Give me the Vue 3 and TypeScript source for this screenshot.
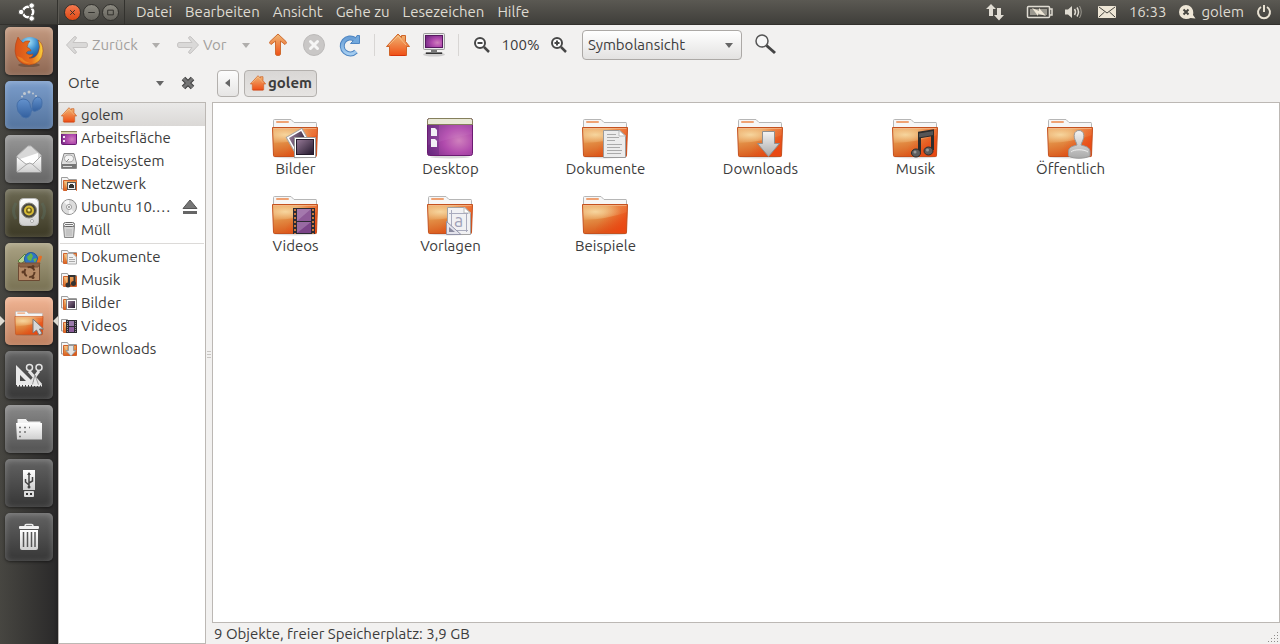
<script setup lang="ts">
import { ref } from 'vue'

interface Entry {
  label: string
  icon: string
}
interface Place extends Entry {
  ejectable?: boolean
}
interface LauncherApp extends Entry {
  tone: string
  running?: boolean
}

const menus: string[] = ['Datei', 'Bearbeiten', 'Ansicht', 'Gehe zu', 'Lesezeichen', 'Hilfe']

const launcher: LauncherApp[] = [
  { label: 'Firefox', icon: 'firefox', tone: 'copper' },
  { label: 'Gwibber', icon: 'feet', tone: 'blue' },
  { label: 'Evolution', icon: 'envelope', tone: 'silver' },
  { label: 'Banshee', icon: 'speaker', tone: 'olive' },
  { label: 'Software-Center', icon: 'bag', tone: 'khaki' },
  { label: 'Dateien', icon: 'files', tone: 'peach', running: true },
  { label: 'Anwendungen', icon: 'tools', tone: 'dark' },
  { label: 'Dateien und Ordner', icon: 'drawer', tone: 'grey' },
  { label: 'USB-Stick', icon: 'usb', tone: 'dark' },
  { label: 'Müll', icon: 'bin', tone: 'dark' },
]

const places: Place[] = [
  { label: 'golem', icon: 'home' },
  { label: 'Arbeitsfläche', icon: 'desktop' },
  { label: 'Dateisystem', icon: 'disk' },
  { label: 'Netzwerk', icon: 's-network' },
  { label: 'Ubuntu 10.…', icon: 'cd', ejectable: true },
  { label: 'Müll', icon: 's-trash' },
]

const bookmarks: Place[] = [
  { label: 'Dokumente', icon: 's-documents' },
  { label: 'Musik', icon: 's-music' },
  { label: 'Bilder', icon: 's-pictures' },
  { label: 'Videos', icon: 's-videos' },
  { label: 'Downloads', icon: 's-downloads' },
]

const folders: Entry[] = [
  { label: 'Bilder', icon: 'pictures' },
  { label: 'Desktop', icon: 'desktop-large' },
  { label: 'Dokumente', icon: 'documents' },
  { label: 'Downloads', icon: 'downloads' },
  { label: 'Musik', icon: 'music' },
  { label: 'Öffentlich', icon: 'public' },
  { label: 'Videos', icon: 'videos' },
  { label: 'Vorlagen', icon: 'templates' },
  { label: 'Beispiele', icon: 'folder' },
]

const selected = ref('golem')
const view = ref('Symbolansicht')
</script>

<template>
  <svg class="sprite" aria-hidden="true">
    <defs>
      <linearGradient id="g-folder" x1="0" y1="0" x2="0.3" y2="1">
        <stop offset="0" stop-color="#eda866" /><stop offset="0.5" stop-color="#e39047" /><stop offset="1" stop-color="#da5a1c" />
      </linearGradient>
      <linearGradient id="g-red" x1="0" y1="0" x2="1" y2="0.35">
        <stop offset="0.5" stop-color="#ee4310" stop-opacity="0" /><stop offset="1" stop-color="#ee4310" stop-opacity="0.75" />
      </linearGradient>
      <radialGradient id="g-shine" cx="0.28" cy="0.45" r="0.6">
        <stop offset="0" stop-color="#f8dca6" stop-opacity="0.9" /><stop offset="1" stop-color="#f6d39b" stop-opacity="0.1" />
      </radialGradient>
      <linearGradient id="g-orange" x1="0" y1="0" x2="0" y2="1">
        <stop offset="0" stop-color="#efb877" /><stop offset="1" stop-color="#ef5016" />
      </linearGradient>
      <linearGradient id="g-white" x1="0" y1="0" x2="0" y2="1">
        <stop offset="0" stop-color="#ffffff" /><stop offset="1" stop-color="#cfcfcf" />
      </linearGradient>
      <linearGradient id="g-steel" x1="0" y1="0" x2="0" y2="1">
        <stop offset="0" stop-color="#f4f4f4" /><stop offset="1" stop-color="#a9a9a9" />
      </linearGradient>
      <linearGradient id="g-blue" x1="0" y1="0" x2="0" y2="1">
        <stop offset="0" stop-color="#6a9fd6" /><stop offset="1" stop-color="#a5cdf0" />
      </linearGradient>
      <radialGradient id="g-purple" cx="0.7" cy="0.6" r="0.75">
        <stop offset="0" stop-color="#cf80bd" /><stop offset="0.45" stop-color="#b14bad" /><stop offset="1" stop-color="#772c86" />
      </radialGradient>
      <linearGradient id="g-photo" x1="0" y1="0" x2="1" y2="1">
        <stop offset="0" stop-color="#937794" /><stop offset="1" stop-color="#251a2e" />
      </linearGradient>
      <radialGradient id="g-globe" cx="0.45" cy="0.2" r="0.8">
        <stop offset="0" stop-color="#a5e5fb" /><stop offset="0.45" stop-color="#3588cb" /><stop offset="1" stop-color="#123675" />
      </radialGradient>
      <linearGradient id="g-fox" x1="0" y1="0" x2="1" y2="0">
        <stop offset="0" stop-color="#d9521a" /><stop offset="0.6" stop-color="#e8701d" /><stop offset="1" stop-color="#fbd43d" />
      </linearGradient>
      <linearGradient id="g-foot" x1="0" y1="0" x2="0" y2="1">
        <stop offset="0" stop-color="#6492cd" /><stop offset="1" stop-color="#325f9e" />
      </linearGradient>
    </defs>

    <symbol id="folder" viewBox="0 0 48 44">
      <ellipse cx="24" cy="41" rx="21" ry="1.5" fill="#000" opacity="0.13" />
      <path d="M2.5 14V4.5Q2.5 3.5 3.5 3.5H20L23 6.5H45Q45.5 6.5 45.5 7.5V14Z" fill="#f6f6f6" stroke="#b6b6b6" />
      <rect x="5" y="5" width="13" height="2" rx="1" fill="#efa273" />
      <path d="M1.5 11.5H46.5L45.5 39.5Q45.5 40.5 44.5 40.5H3.5Q2.5 40.5 2.5 39.5Z" fill="url(#g-folder)" />
      <path d="M1.5 11.5H46.5L45.5 40.5H2.5Z" fill="url(#g-red)" />
      <path d="M2 12H46V19Q28 26 2 27Z" fill="url(#g-shine)" />
      <path d="M1.5 11.5H46.5L45.5 39.5Q45.5 40.5 44.5 40.5H3.5Q2.5 40.5 2.5 39.5Z" fill="none" stroke="#c4511f" />
      <path d="M2.5 12.5H45.5" stroke="#f5bd90" opacity="0.7" />
    </symbol>
    <symbol id="pictures" viewBox="0 0 48 44">
      <use href="#folder" width="48" height="44" />
      <g transform="rotate(-30 26 25)">
        <rect x="18.5" y="16.5" width="18" height="18" fill="#fff" stroke="#a5a5a5" />
        <rect x="20.5" y="18.5" width="14" height="13" fill="url(#g-photo)" />
      </g>
      <rect x="23.5" y="21.5" width="21" height="20" fill="#fff" stroke="#9c9c9c" />
      <rect x="25" y="23" width="18" height="16" fill="#241a2b" />
      <rect x="26" y="24" width="16" height="14" fill="url(#g-photo)" />
    </symbol>
    <symbol id="desktop-large" viewBox="0 0 48 44">
      <ellipse cx="24" cy="41" rx="20" ry="1.5" fill="#000" opacity="0.15" />
      <rect x="1.5" y="2.5" width="45" height="37" rx="2" fill="url(#g-purple)" stroke="#6b1b72" />
      <path d="M2 9H46V18Q25 22 2 29Z" fill="#d08ad0" opacity="0.15" />
      <rect x="2" y="9" width="11" height="30" fill="#3f1f6a" opacity="0.25" />
      <path d="M1.5 8.5V4.5Q1.5 2.5 3.5 2.5H44.5Q46.5 2.5 46.5 4.5V8.5Z" fill="#e9e8d6" stroke="#85805c" />
      <path d="M5 12H9L11 14V20H5ZM5 23H9L11 25V31H5Z" fill="#f2eff5" />
    </symbol>
    <symbol id="documents" viewBox="0 0 48 44">
      <use href="#folder" width="48" height="44" />
      <path d="M22.5 14.5H39L44.5 20V41.5H22.5Z" fill="#ececec" stroke="#9b9b9b" />
      <path d="M38 14.5V20H44.5Z" fill="#fff" stroke="#bbb" />
      <path d="M26 18.5H35M26 21.5H38M26 24.5H34M26 28.5H41M26 31.5H39M26 34.5H41M26 37.5H40" stroke="#aaa" />
    </symbol>
    <symbol id="downloads" viewBox="0 0 48 44">
      <use href="#folder" width="48" height="44" />
      <path d="M26.5 15.5H38.5V27.5H43.5L32.5 40.5L21.5 27.5H26.5Z" fill="url(#g-steel)" stroke="#8f8f8f" />
    </symbol>
    <symbol id="music" viewBox="0 0 48 44">
      <use href="#folder" width="48" height="44" />
      <path d="M28.500 36V17L41.500 15V34" fill="none" stroke="#2c2c2c" stroke-width="3" />
      <path d="M27.500 17L42.500 14.500V19.500L27.500 22Z" fill="#555" stroke="#2c2c2c" />
      <ellipse cx="25" cy="37" rx="4.500" ry="4" fill="#5e5e5e" stroke="#2c2c2c" />
      <ellipse cx="37.500" cy="35" rx="4.500" ry="4" fill="#5e5e5e" stroke="#2c2c2c" />
      <circle cx="24" cy="36" r="1.500" fill="#999" /><circle cx="36.500" cy="34" r="1.500" fill="#999" />
    </symbol>
    <symbol id="public" viewBox="0 0 48 44">
      <use href="#folder" width="48" height="44" />
      <path d="M31 29Q30.500 27 29.500 25C27 20 28 14.500 33 14.500C38 14.500 39 20 36.500 25Q35.500 27 35 29C40 30.500 44 31 44 36V40C39 43 27 43 22.500 40V36C22.500 31 26 30.500 31 29Z" fill="url(#g-steel)" stroke="#999" />
      <path d="M25 36C28 33 38 33 42 36" fill="none" stroke="#fff" opacity="0.7" />
    </symbol>
    <symbol id="videos" viewBox="0 0 48 44">
      <use href="#folder" width="48" height="44" />
      <rect x="22" y="15" width="22" height="26" fill="#2d2b33" />
      <rect x="26" y="16" width="14" height="12" fill="#8e5a98" /><rect x="26" y="29" width="14" height="11" fill="#7b4488" />
      <path d="M26 16H40L26 28ZM26 29H40L26 40Z" fill="#cdb2d4" opacity="0.35" />
      <path d="M24 16V41M42 16V41" stroke="#c9773f" stroke-width="2" stroke-dasharray="2 2" />
    </symbol>
    <symbol id="templates" viewBox="0 0 48 44">
      <use href="#folder" width="48" height="44" />
      <path d="M21.5 14.5H39L44.5 20V41.5H21.5Z" fill="#f1f1f3" stroke="#a3a3a3" />
      <path d="M38 14.5V20H44.5Z" fill="#fff" stroke="#bbb" />
      <path d="M25.5 17V37M40.5 20V39M23 20.5H42M27 37.5H42" stroke="#a9abbd" />
      <text x="28" y="34" font-size="18" fill="#9fa1b8">a</text>
      <path d="M20.5 28.5L35 41.5H20.5Z" fill="#e3e3ec" stroke="#9294a9" />
      <path d="M23 34L29 39H23Z" fill="#8a8ba0" />
    </symbol>

    <symbol id="home" viewBox="0 0 24 24">
      <path d="M0.5 13.5L12 1L15.5 4.5V2.5H19.5V8.5L23.5 13.5H20.5V22.5H3.5V13.5Z" fill="url(#g-orange)" stroke="#cf6428" />
      <path d="M4.5 22.5H19.5" stroke="#d7340c" />
      <path d="M3 12L12 3L20 12" fill="none" stroke="#fad3a0" opacity="0.6" />
    </symbol>
    <symbol id="desktop" viewBox="0 0 16 16">
      <rect x="0.5" y="1.5" width="15" height="13" rx="1" fill="url(#g-purple)" stroke="#6b1b72" />
      <rect x="0" y="1" width="16" height="3" fill="#d7d3ad" /><path d="M0 1.5H16" stroke="#8a845e" />
      <path d="M2 6H4V8H2ZM2 10H4V12H2Z" fill="#f3e7f5" />
    </symbol>
    <symbol id="disk" viewBox="0 0 16 16">
      <path d="M3 0.5H13L15.5 10V15.5H0.5V10Z" fill="#dedede" stroke="#8b8b8b" />
      <path d="M1 11H15V15H1Z" fill="#777" />
      <ellipse cx="8" cy="5.5" rx="4.5" ry="3.5" fill="#f4f4f4" stroke="#aaa" /><path d="M8 6L5 9" stroke="#888" /><path d="M2 13.5H11" stroke="#ddd" />
    </symbol>
    <symbol id="s-folder" viewBox="0 0 16 16">
      <path d="M0.5 13V1.5H6.5L7.5 3.5H15.5V13Z" fill="#f5f5f5" stroke="#9e9e9e" />
      <path d="M2.5 4.5H15.5V14.5H2.5Z" fill="url(#g-folder)" stroke="#d0622c" />
      <path d="M3 5H6V12Z" fill="#f8dca6" opacity="0.5" />
    </symbol>
    <symbol id="s-network" viewBox="0 0 16 16">
      <use href="#s-folder" width="16" height="16" />
      <rect x="6" y="6" width="9" height="9" fill="#fff" /><rect x="6.5" y="6.5" width="8" height="7" fill="#f1f1f1" stroke="#555" />
      <path d="M8 12V9H9V8H12V9H13V12Z" fill="#333" />
    </symbol>
    <symbol id="cd" viewBox="0 0 16 16">
      <circle cx="8" cy="8" r="7.5" fill="#dcdcdc" stroke="#8e8e8e" />
      <path d="M8 8L3 3A7 7 0 0 1 8 1ZM8 8L13 13A7 7 0 0 1 8 15Z" fill="#f7f7f7" />
      <circle cx="8" cy="8" r="2.5" fill="#fff" stroke="#999" /><circle cx="8" cy="8" r="1" fill="#888" />
    </symbol>
    <symbol id="s-trash" viewBox="0 0 16 16">
      <path d="M2.5 4H13.5L12.5 15.500H3.5Z" fill="#d4d4d4" stroke="#868686" />
      <path d="M6 7V14M8 7V14M10 7V14" stroke="#b4b4b4" />
      <rect x="2.5" y="0.5" width="11" height="4" rx="2" fill="#f4f4f4" stroke="#666" /><path d="M4 2.5H12" stroke="#777" />
    </symbol>
    <symbol id="s-documents" viewBox="0 0 16 16">
      <use href="#s-folder" width="16" height="16" />
      <path d="M6.5 4.5H12L15.5 8V15H6.5Z" fill="#f1f1f1" stroke="#aaa" /><path d="M8 8.5H12M8 10.5H14M8 12.5H14" stroke="#aaa" />
    </symbol>
    <symbol id="s-music" viewBox="0 0 16 16">
      <use href="#s-folder" width="16" height="16" />
      <path d="M8 12V4H13.5V11" fill="none" stroke="#333" stroke-width="2" /><circle cx="7" cy="13" r="2.5" fill="#333" /><circle cx="12.5" cy="11.5" r="2.5" fill="#333" />
    </symbol>
    <symbol id="s-pictures" viewBox="0 0 16 16">
      <use href="#s-folder" width="16" height="16" />
      <rect x="5.5" y="4.5" width="10" height="10" fill="#fff" stroke="#888" /><rect x="7" y="6" width="7" height="7" fill="url(#g-photo)" />
    </symbol>
    <symbol id="s-videos" viewBox="0 0 16 16">
      <use href="#s-folder" width="16" height="16" />
      <rect x="5" y="2" width="11" height="13" fill="#2d2b33" /><rect x="8" y="3" width="5" height="5" fill="#9a7aab" /><rect x="8" y="9" width="5" height="5" fill="#8d5c9c" />
      <path d="M6.5 3V15M14.5 3V15" stroke="#999" stroke-dasharray="1 1" />
    </symbol>
    <symbol id="s-downloads" viewBox="0 0 16 16">
      <use href="#s-folder" width="16" height="16" />
      <path d="M7.5 4.5H12.5V9.5H15L10 15L5 9.5H7.5Z" fill="#e4e4e4" stroke="#999" />
    </symbol>

    <symbol id="arrow-left" viewBox="0 0 24 24">
      <path d="M1.5 12L9 4Q10 3 11 4L11.5 5L8 9.5H21Q22.5 9.5 22.5 12Q22.5 14.5 21 14.5H8L11.5 19L11 20Q10 21 9 20Z" fill="#dad9d8" stroke="#c6c4c3" />
    </symbol>
    <symbol id="arrow-up" viewBox="0 0 24 24">
      <path d="M12 1L20 8.5Q21 9.5 20 10.5L19 11.5L14.5 8V21Q14.5 22.5 12 22.5Q9.5 22.5 9.5 21V8L5 11.5L4 10.5Q3 9.5 4 8.5Z" fill="url(#g-orange)" stroke="#cf6b2f" />
    </symbol>
    <symbol id="stop" viewBox="0 0 24 24">
      <circle cx="12" cy="12" r="10.5" fill="#c9c7c6" stroke="#bcbab9" /><path d="M8.5 8.5L15.5 15.5M15.5 8.5L8.5 15.5" stroke="#f6f6f5" stroke-width="3" stroke-linecap="round" />
    </symbol>
    <symbol id="reload" viewBox="0 0 24 24">
      <path d="M18 18.500A8 8 0 1 1 17 6.500" fill="none" stroke="#4f86c2" stroke-width="5" />
      <path d="M12.500 10.500H21.500V2.500H19L17 6Z" fill="#72a8dc" stroke="#4f86c2" />
      <path d="M18 18.500A8 8 0 1 1 17 6.500" fill="none" stroke="url(#g-blue)" stroke-width="3" /><path d="M18 9L17 6" stroke="#72a8dc" stroke-width="3" />
    </symbol>
    <symbol id="computer" viewBox="0 0 24 24">
      <ellipse cx="12" cy="21.5" rx="11" ry="2" fill="#aaa" opacity="0.5" />
      <path d="M9 16H15V19H20Q21 21 20 21H4Q3 21 4 19H9Z" fill="#777" /><path d="M4 20.5H20" stroke="#333" />
      <rect x="1.5" y="0.5" width="21" height="16" rx="1" fill="#e9e9e9" stroke="#9b9b9b" /><rect x="3.5" y="2.5" width="17" height="12" fill="url(#g-purple)" stroke="#56195f" />
    </symbol>
    <symbol id="zoom-out" viewBox="0 0 16 16">
      <circle cx="6" cy="6" r="5" fill="#fff" stroke="#474747" stroke-width="2" /><path d="M10 10L15 15" stroke="#474747" stroke-width="2.5" /><path d="M3.500 6H8.500" stroke="#474747" stroke-width="2" />
    </symbol>
    <symbol id="zoom-in" viewBox="0 0 16 16">
      <use href="#zoom-out" width="16" height="16" /><path d="M6 3.500V8.500" stroke="#474747" stroke-width="2" />
    </symbol>
    <symbol id="search" viewBox="0 0 24 24">
      <circle cx="9" cy="8" r="6" fill="#f7f7f7" stroke="#555" stroke-width="1.5" /><path d="M13.5 12.5L22 20" stroke="#444" stroke-width="3" />
    </symbol>
    <symbol id="caret" viewBox="0 0 10 10">
      <path d="M1 3H9L5 8Z" fill="currentColor" />
    </symbol>
    <symbol id="close-places" viewBox="0 0 16 16">
      <path d="M3.5 3.5L12.5 12.5M12.5 3.5L3.5 12.5" stroke="#3f3f3f" stroke-width="5" /><path d="M3.5 3.5L12.5 12.5M12.5 3.5L3.5 12.5" stroke="#747474" stroke-width="3" />
    </symbol>
    <symbol id="eject" viewBox="0 0 16 16">
      <path d="M8 1L15 9.5H1Z" fill="#777" stroke="#555" /><rect x="1" y="12" width="14" height="3" fill="#666" />
    </symbol>

    <symbol id="ubuntu" viewBox="0 0 24 24">
      <circle cx="12" cy="12" r="5.5" fill="none" stroke="#fff" stroke-width="3" />
      <path d="M12 12L4 12M12 12L16 5M12 12L16 19" stroke="#4c4a45" stroke-width="1.5" />
      <circle cx="12" cy="12" r="4" fill="#4c4a45" />
      <g fill="#fff" stroke="#4c4a45"><circle cx="4.5" cy="12" r="3" /><circle cx="16" cy="5" r="3" /><circle cx="16" cy="19" r="3" /></g>
    </symbol>
    <symbol id="network" viewBox="0 0 20 20">
      <path d="M6 2L11 7H8V14H4V7H1ZM14 18.500L9 13H12V6H16V13H19Z" fill="#dfdbd2" />
    </symbol>
    <symbol id="battery" viewBox="0 0 28 16">
      <rect x="1.5" y="2.5" width="22" height="11" rx="1" fill="none" stroke="#dfdbd2" stroke-width="1.5" /><rect x="4" y="5" width="17" height="6" fill="#9b988f" />
      <path d="M24 5H26V11H24" fill="none" stroke="#dfdbd2" stroke-width="1.5" /><path d="M6 4L13 7V4L20 12L12 9.5V12Z" fill="#eee6d6" />
    </symbol>
    <symbol id="sound" viewBox="0 0 18 16">
      <path d="M1 5.5H4L8 2V14L4 10.5H1Z" fill="#dfdbd2" /><path d="M10.5 5Q12.5 8 10.5 11M13 3.5Q16 8 13 12.5" fill="none" stroke="#dfdbd2" stroke-width="1.5" /><path d="M15.5 2Q19 8 15.5 14" fill="none" stroke="#9b988f" />
    </symbol>
    <symbol id="mail" viewBox="0 0 20 16">
      <rect x="1" y="2" width="18" height="12" rx="1" fill="#eee6d6" /><path d="M2 3L10 9L18 3M2 13L7.5 8M18 13L12.5 8" fill="none" stroke="#45443f" />
    </symbol>
    <symbol id="chat" viewBox="0 0 18 16">
      <path d="M8 1A7 7 0 1 0 8 15Q11 15 12.5 14L17.5 14.5L15 11Q16 6 13 3Q11 1 8 1Z" fill="#eee6d6" /><path d="M5.5 5.5L10.5 10.5M10.5 5.5L5.5 10.5" stroke="#45443f" stroke-width="2" />
    </symbol>
    <symbol id="power" viewBox="0 0 16 16">
      <path d="M5 3A6 6 0 1 0 11 3" fill="none" stroke="#e8e1d2" stroke-width="2" /><path d="M8 1V8" stroke="#e8e1d2" stroke-width="2" />
    </symbol>

    <symbol id="firefox" viewBox="0 0 48 48">
      <ellipse cx="24" cy="38" rx="11" ry="2" fill="#3a2418" opacity="0.35" />
      <circle cx="25" cy="22.5" r="12.5" fill="url(#g-globe)" />
      <path d="M15 13L13 10Q10 16 10 24Q11 37 24 38Q37 37 38 24Q38 16 33 13Q36 20 33 26Q30 32 24 31Q28 30 28 27Q24 29 21 26Q23 23 26 24Q26 22 22 20Q23 16 25 14Q20 13 18 16Z" fill="url(#g-fox)" stroke="#a93f13" stroke-width="0.5" />
      <path d="M12 29Q16 37 25 36Q20 35 17 31Z" fill="#f6a22e" opacity="0.5" />
    </symbol>
    <symbol id="feet" viewBox="0 0 48 48">
      <path d="M18 18Q25 18 25.5 26Q28 29 26 31Q26 36 21 37Q16 36 16 34Q12 31 12 25Q12 19 18 18Z" fill="url(#g-foot)" stroke="#456fa8" />
      <path d="M32.5 16Q37 16 37 22Q37 28 33 29Q28 32 27 28Q27 17 32.5 16Z" fill="url(#g-foot)" stroke="#456fa8" />
      <g fill="#c1c9d0"><circle cx="17" cy="15.5" r="1" /><circle cx="19.5" cy="12.5" r="1.5" /><circle cx="24" cy="11" r="1.5" /><circle cx="28" cy="12.5" r="1" /><circle cx="31" cy="15" r="1" /></g>
    </symbol>
    <symbol id="envelope" viewBox="0 0 48 48">
      <path d="M12 21L23 11H26L36 20V37H12Z" fill="#d8d8d8" stroke="#b5b5b5" /><path d="M15 24L33 18V28H17Z" fill="#fff" />
      <path d="M12 22L22 30L30 28L36 21V37H12Z" fill="url(#g-white)" /><path d="M12 37L22 29Q25 27 27 29L36 37M12 22L22 30M36 21L28 29" fill="none" stroke="#a7a7a7" />
    </symbol>
    <symbol id="speaker" viewBox="0 0 48 48">
      <path d="M11 14Q6 22 11 30M37 14Q42 22 37 30" fill="none" stroke="#597064" stroke-width="3" opacity="0.4" />
      <rect x="14.5" y="9.5" width="19" height="27" rx="4" fill="url(#g-white)" stroke="#bababa" />
      <circle cx="24" cy="21.5" r="7.5" fill="#48473f" stroke="#8c8b80" /><circle cx="24" cy="21.5" r="5" fill="#d9bd36" /><circle cx="24" cy="21.5" r="3" fill="#756318" /><circle cx="24" cy="21" r="1.5" fill="#f1e17b" /><circle cx="27" cy="32" r="1.5" fill="#fff" stroke="#aaa" />
    </symbol>
    <symbol id="bag" viewBox="0 0 48 48">
      <path d="M13 18L20 11L23 15L16 21Z" fill="#b4d391" stroke="#56803f" /><circle cx="26" cy="16" r="6.5" fill="#2f75c4" stroke="#20559a" /><path d="M22 14L26 10L28 13L26 18L23 17ZM28 16L32 15L30 20Z" fill="#64b44b" />
      <path d="M31 21L34 13Q37 12 37 14L34 22Z" fill="#e76d22" />
      <path d="M13.5 21.5H34.500V37.5H13.5Z" fill="#b58a67" stroke="#6d4a33" /><path d="M13 20L15 24H33L35 20Z" fill="#8d6345" stroke="#79533a" />
      <circle cx="24.500" cy="29" r="5" fill="none" stroke="#5e3b25" stroke-width="2" stroke-dasharray="8 2.5" /><g fill="#5e3b25"><circle cx="18" cy="29" r="1.5" /><circle cx="28" cy="23.5" r="1.5" /><circle cx="28" cy="34.5" r="1.5" /></g>
    </symbol>
    <symbol id="files" viewBox="0 0 48 48">
      <use href="#folder" x="9" y="12" width="30" height="28" />
      <path d="M28 22V36L31.5 33L34 38L37 36.5L34.5 32H38.5Z" fill="#d8d8d8" stroke="#777" />
    </symbol>
    <symbol id="tools" viewBox="0 0 48 48">
      <path d="M11 14V34H31ZM15 24L21 30H15Z" fill="#e8e8e8" fill-rule="evenodd" />
      <path d="M24 20L36 34M34 20L24 34" stroke="#e4e4e4" stroke-width="3" /><circle cx="24.5" cy="16.5" r="3" fill="none" stroke="#e4e4e4" stroke-width="1.5" /><circle cx="34" cy="16.5" r="3" fill="none" stroke="#e4e4e4" stroke-width="1.5" />
      <path d="M27 35L30 24L34 35" fill="#e8e8e8" stroke="#555" stroke-width="0.5" /><path d="M12 34.5H37" stroke="#eee" stroke-width="2" stroke-dasharray="2 1" />
    </symbol>
    <symbol id="drawer" viewBox="0 0 48 48">
      <path d="M12 22V13.5H21L23 16H36V20" fill="#f2f2f2" stroke="#777" /><path d="M11 18H37V34.5H12Z" fill="url(#g-white)" />
      <path d="M14 22.5H16M19 22.5H21M24 22.5H25M14 27H16M19 27H21M14 31.5H16" stroke="#777" stroke-width="1.5" />
    </symbol>
    <symbol id="usb" viewBox="0 0 48 48">
      <rect x="18" y="11" width="12" height="20" fill="url(#g-white)" /><rect x="19" y="32" width="10" height="6" rx="1" fill="#ddd" /><path d="M21 34H23V36H21ZM25 34H27V36H25Z" fill="#333" />
      <path d="M24 14V28M24 26L20.5 23V20M24 24L27.5 22V18" fill="none" stroke="#444" stroke-width="1.5" /><path d="M22 16H26L24 13Z" fill="#444" /><circle cx="24" cy="28" r="1.5" fill="#444" />
    </symbol>
    <symbol id="bin" viewBox="0 0 48 48">
      <path d="M20 13Q20 11.5 21.5 11.5H26.5Q28 11.5 28 13" fill="none" stroke="#eee" stroke-width="1.5" /><rect x="14" y="13" width="20" height="3" rx="1" fill="#f2f2f2" />
      <path d="M15 17H33V35Q33 37 31 37H17Q15 37 15 35Z" fill="url(#g-white)" /><path d="M18.5 19V34M22.5 19V34M26.5 19V34M30 19V34" stroke="#555" stroke-width="1.5" />
    </symbol>
  </svg>

  <div class="screen">
    <header class="panel">
      <button class="logo" aria-label="Ubuntu"><svg class="i22"><use href="#ubuntu" /></svg></button>
      <div class="window-buttons">
        <button class="wbtn close" aria-label="Schließen"><svg viewBox="0 0 16 16"><path d="M5.5 5.5L10.5 10.5M10.5 5.5L5.5 10.5" /></svg></button>
        <button class="wbtn" aria-label="Minimieren"><svg viewBox="0 0 16 16"><path d="M4.5 8H11.5" /></svg></button>
        <button class="wbtn" aria-label="Maximieren"><svg viewBox="0 0 16 16"><path d="M5 5.5H11V10.5H5Z" /></svg></button>
      </div>
      <nav class="menus">
        <button v-for="m in menus" :key="m">{{ m }}</button>
      </nav>
      <div class="indicators">
        <button aria-label="Netzwerk"><svg class="i20"><use href="#network" /></svg></button>
        <button class="battery" aria-label="Akku"><svg><use href="#battery" /></svg></button>
        <button class="volume" aria-label="Lautstärke"><svg class="i18"><use href="#sound" /></svg></button>
        <button aria-label="Nachrichten"><svg class="mail"><use href="#mail" /></svg></button>
        <button class="clock">16:33</button>
        <button class="user"><svg class="i18"><use href="#chat" /></svg>golem</button>
        <button aria-label="Herunterfahren"><svg class="i16"><use href="#power" /></svg></button>
      </div>
    </header>

    <aside class="launcher">
      <button v-for="a in launcher" :key="a.label" class="tile" :class="[a.tone, { running: a.running }]" :aria-label="a.label">
        <svg><use :href="'#' + a.icon" /></svg>
      </button>
    </aside>

    <div class="window">
      <div class="toolbar">
        <button class="nav back" disabled><svg class="i24"><use href="#arrow-left" /></svg>Zurück</button>
        <button class="drop" disabled aria-label="Verlauf zurück"><svg class="i10"><use href="#caret" /></svg></button>
        <button class="nav forward" disabled><svg class="i24 flip"><use href="#arrow-left" /></svg>Vor</button>
        <button class="drop" disabled aria-label="Verlauf vor"><svg class="i10"><use href="#caret" /></svg></button>
        <button class="tool first" aria-label="Übergeordneten Ordner öffnen"><svg class="i24"><use href="#arrow-up" /></svg></button>
        <button class="tool" disabled aria-label="Abbrechen"><svg class="i24"><use href="#stop" /></svg></button>
        <button class="tool" aria-label="Neu laden"><svg class="i24"><use href="#reload" /></svg></button>
        <span class="divider"></span>
        <button class="tool" aria-label="Persönlicher Ordner"><svg class="i24"><use href="#home" /></svg></button>
        <button class="tool" aria-label="Rechner"><svg class="i24"><use href="#computer" /></svg></button>
        <span class="divider"></span>
        <button class="tool" aria-label="Verkleinern"><svg class="i16"><use href="#zoom-out" /></svg></button>
        <span class="zoom-level">100%</span>
        <button class="tool" aria-label="Vergrößern"><svg class="i16"><use href="#zoom-in" /></svg></button>
        <div class="combo">
          <select v-model="view" aria-label="Ansicht">
            <option>Symbolansicht</option>
            <option>Listenansicht</option>
            <option>Kompakte Ansicht</option>
          </select>
          <svg class="i10"><use href="#caret" /></svg>
        </div>
        <button class="tool" aria-label="Suchen"><svg class="i24"><use href="#search" /></svg></button>
      </div>

      <div class="body">
        <section class="side">
          <div class="side-head">
            <button class="side-title">Orte<svg class="i10"><use href="#caret" /></svg></button>
            <button class="side-close" aria-label="Seitenleiste schließen"><svg class="i16"><use href="#close-places" /></svg></button>
          </div>
          <div class="side-list">
            <ul>
              <li v-for="p in places" :key="p.label" :class="{ selected: p.label === selected }">
                <button class="place" @click="selected = p.label"><svg class="i16"><use :href="'#' + p.icon" /></svg><span>{{ p.label }}</span></button>
                <button v-if="p.ejectable" class="eject" aria-label="Auswerfen"><svg class="i16"><use href="#eject" /></svg></button>
              </li>
            </ul>
            <hr />
            <ul>
              <li v-for="p in bookmarks" :key="p.label">
                <button class="place"><svg class="i16"><use :href="'#' + p.icon" /></svg><span>{{ p.label }}</span></button>
              </li>
            </ul>
          </div>
        </section>
        <div class="splitter"><i></i><i></i><i></i></div>
        <main class="main">
          <div class="path">
            <button class="crumb-back" aria-label="Zurückblättern"><svg class="i10 turned"><use href="#caret" /></svg></button>
            <button class="crumb"><svg class="i16"><use href="#home" /></svg>golem</button>
          </div>
          <div class="files">
            <button v-for="f in folders" :key="f.label" class="file">
              <svg><use :href="'#' + f.icon" /></svg>
              <span>{{ f.label }}</span>
            </button>
          </div>
          <footer class="status">
            <span>9 Objekte, freier Speicherplatz: 3,9 GB</span>
            <svg class="grip" viewBox="0 0 12 12"><path d="M9 0H10V1H9ZM6 3H7V4H6ZM9 3H10V4H9ZM3 6H4V7H3ZM6 6H7V7H6ZM9 6H10V7H9ZM0 9H1V10H0ZM3 9H4V10H3ZM6 9H7V10H6ZM9 9H10V10H9Z" /></svg>
          </footer>
        </main>
      </div>
    </div>
  </div>
</template>

<style>
body {
  margin: 0;
}
</style>

<style scoped>
.sprite {
  position: absolute;
  width: 0;
  height: 0;
}
.sprite,
.screen {
  font: 15px/18px Ubuntu, "Noto Sans", "Open Sans", sans-serif;
}
.screen {
  display: grid;
  grid-template: 25px minmax(0, 1fr) / 58px minmax(0, 1fr);
  height: 100vh;
  overflow: hidden;
  background: #f2f1f0;
  color: #3c3c3c;
}
button {
  display: flex;
  align-items: center;
  margin: 0;
  padding: 0;
  border: 0;
  background: none;
  color: inherit;
  font: inherit;
  white-space: nowrap;
}
svg {
  display: block;
  flex: none;
}
.i10 { width: 10px; height: 10px; }
.i16 { width: 16px; height: 16px; }
.i18 { width: 18px; height: 16px; }
.i20 { width: 20px; height: 20px; }
.i22 { width: 22px; height: 22px; }
.i24 { width: 24px; height: 24px; }

.panel {
  grid-column: 1 / -1;
  display: flex;
  align-items: stretch;
  border-bottom: 1px solid #33312d;
  background: linear-gradient(#5b5953, #3f3e3a);
  color: #dfdbd2;
}
.logo {
  box-sizing: border-box;
  justify-content: center;
  width: 58px;
  padding-right: 2px;
  border-right: 1px solid #33322e;
}
.window-buttons {
  display: flex;
  align-items: center;
  gap: 2px;
  padding: 0 5px;
  border-left: 1px solid #5d5b55;
  border-right: 1px solid #33322e;
}
.wbtn {
  box-sizing: border-box;
  width: 17px;
  height: 17px;
  border: 1px solid #33322e;
  border-radius: 50%;
  background: linear-gradient(#8b8980, #66645d);
}
.wbtn.close {
  background: linear-gradient(#f4794f, #dd4814);
}
.wbtn svg {
  width: 15px;
  height: 15px;
  fill: none;
  stroke: #2f2e2a;
}
.menus {
  display: flex;
  gap: 13px;
  margin-left: 11px;
}
.indicators {
  display: flex;
  gap: 12px;
  margin-left: auto;
  padding-right: 8px;
}
.battery {
  margin: 0 0 0 9px;
}
.battery svg { width: 28px; height: 16px; }
.volume {
  margin: 0 3px 0 -2px;
}
.mail { width: 20px; height: 16px; }
.user {
  gap: 5px;
}

.launcher {
  display: flex;
  flex-direction: column;
  align-items: center;
  gap: 6px;
  padding-top: 2px;
  overflow: hidden;
  background: linear-gradient(90deg, #474641, #2c2b2b 92%, #242324);
}
.tile {
  position: relative;
  flex: none;
  width: 48px;
  height: 48px;
  border-radius: 5px;
  box-shadow: inset 0 1px 6px rgba(255, 255, 255, 0.25), 0 1px 3px rgba(0, 0, 0, 0.5);
}
.tile svg { width: 48px; height: 48px; }
.copper { background: linear-gradient(#c49a80, #8d6753); }
.blue { background: linear-gradient(#7b9dcb, #53739d); }
.silver { background: linear-gradient(#989898, #656565); }
.olive { background: linear-gradient(#6d6a54, #3b3824); }
.khaki { background: linear-gradient(#aba384, #777052); }
.peach { background: linear-gradient(#f1b594, #bd7e5d); }
.dark { background: linear-gradient(#636363, #363636); }
.grey { background: linear-gradient(#8a8a8a, #525252); }
.running::before,
.running::after {
  content: "";
  position: absolute;
  top: 19px;
  border: 5px solid transparent;
}
.running::before {
  left: -5px;
  border-right-width: 0;
  border-left-color: #dfdbd2;
}
.running::after {
  right: -5px;
  border-left-width: 0;
  border-right-color: #dfdbd2;
}

.window {
  display: flex;
  flex-direction: column;
  min-width: 0;
  min-height: 0;
}
.toolbar {
  display: flex;
  align-items: center;
  height: 39px;
  padding-left: 7px;
}
.nav {
  gap: 3px;
  color: #a3a09d;
}
.back { width: 85px; }
.forward { width: 64px; margin-left: 14px; }
.flip { transform: scaleX(-1); }
.drop {
  justify-content: center;
  width: 12px;
  color: #b0aeac;
}
.tool {
  justify-content: center;
  width: 36px;
  height: 32px;
}
.first { margin-left: 8px; }
.divider {
  width: 1px;
  height: 22px;
  margin: 0 5px 0 6px;
  background: #d8d6d4;
}
.zoom-level {
  width: 41px;
  text-align: center;
}
.combo {
  position: relative;
  display: flex;
  align-items: center;
  margin: 0 5px;
}
.combo select {
  width: 160px;
  height: 30px;
  padding: 0 5px;
  border: 1px solid #aca9a6;
  border-radius: 4px;
  appearance: none;
  background: linear-gradient(#fff, #e3e2e1);
  color: inherit;
  font: inherit;
}
.combo svg {
  position: absolute;
  right: 8px;
  color: #666;
  pointer-events: none;
}

.body {
  display: grid;
  grid-template-columns: 148px 6px minmax(0, 1fr);
  flex: 1;
  min-height: 0;
}
.side,
.main {
  display: flex;
  flex-direction: column;
  min-width: 0;
  min-height: 0;
}
.side-head {
  display: flex;
  align-items: center;
  height: 38px;
  padding: 0 10px;
}
.side-title {
  justify-content: space-between;
  width: 97px;
}
.side-title svg { color: #666; }
.side-close {
  margin-left: auto;
}
.side-list {
  flex: 1;
  overflow: hidden;
  border: 1px solid #bcb8b4;
  background: #fff;
}
ul {
  margin: 0;
  padding: 0;
  list-style: none;
}
li {
  display: flex;
  align-items: center;
  height: 23px;
  padding: 0 7px 0 2px;
}
.selected {
  background: linear-gradient(#eae9e8, #dad8d6);
}
.place {
  gap: 4px;
}
.eject {
  margin-left: auto;
}
hr {
  margin: 2px 1px 1px;
  border: 0;
  border-top: 1px solid #dcdad8;
}
.splitter {
  display: flex;
  flex-direction: column;
  align-items: center;
  justify-content: center;
  gap: 2px;
}
.splitter i {
  width: 4px;
  height: 1px;
  background: #c8c5c2;
}
.path {
  display: flex;
  align-items: center;
  gap: 5px;
  height: 38px;
  padding-left: 5px;
}
.crumb-back,
.crumb {
  box-sizing: border-box;
  justify-content: center;
  height: 27px;
  border: 1px solid #b3b0ad;
  border-radius: 4px;
  background: linear-gradient(#fdfdfd, #e6e5e4);
  color: #666;
}
.crumb-back { width: 22px; }
.turned { transform: rotate(90deg); }
.crumb {
  gap: 2px;
  padding: 0 4px 0 5px;
  background: linear-gradient(#d9d7d5, #e6e4e2);
  color: #3c3c3c;
  font-weight: bold;
}
.files {
  display: grid;
  grid-template-columns: repeat(auto-fill, 155px);
  grid-auto-rows: 77px;
  align-content: start;
  flex: 1;
  min-height: 0;
  padding: 13px 0 0 5px;
  border: 1px solid #bcb8b4;
  background: #fff;
}
.file {
  flex-direction: column;
}
.file svg {
  width: 48px;
  height: 44px;
  margin-right: 1px;
}
.status {
  display: flex;
  align-items: center;
  justify-content: space-between;
  height: 21px;
  padding-left: 2px;
}
.grip {
  align-self: flex-end;
  width: 12px;
  height: 12px;
  fill: #8f8c89;
}
</style>
